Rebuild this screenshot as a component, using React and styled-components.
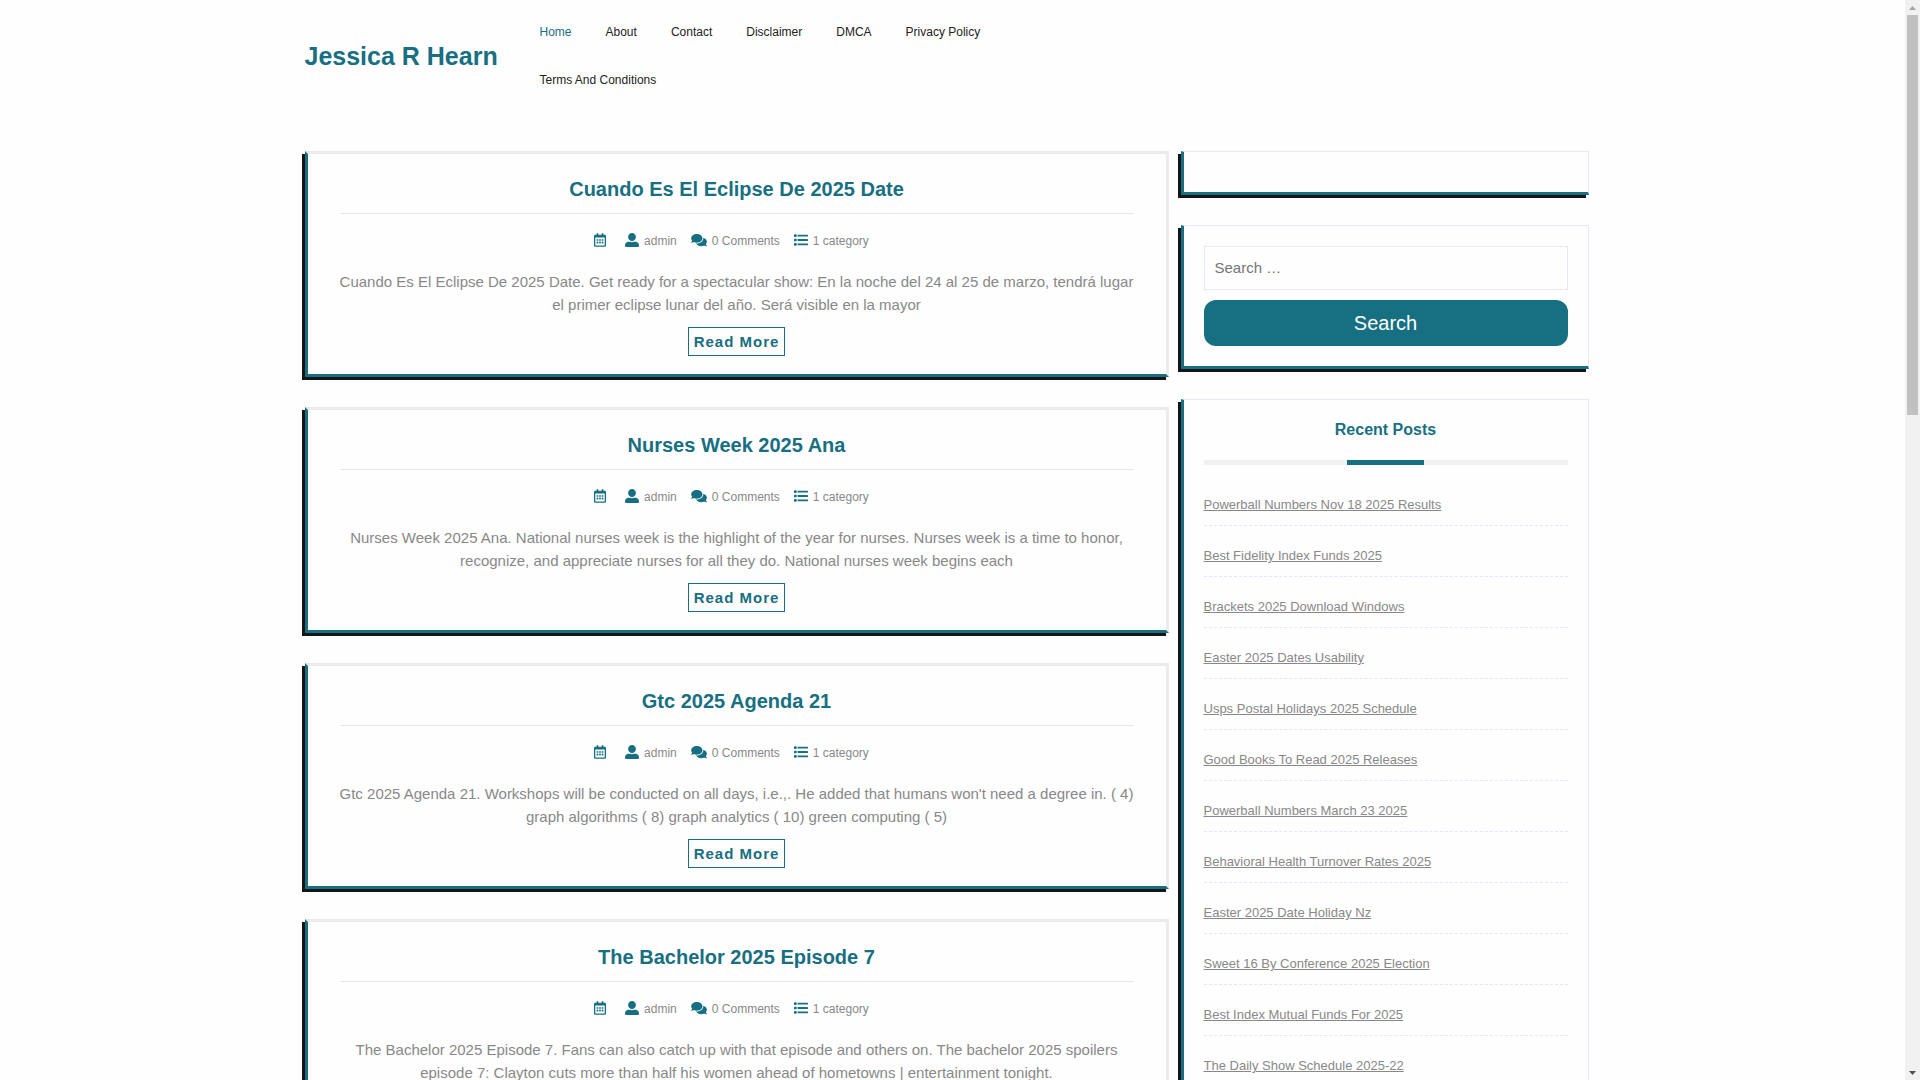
import React from 'react'
import styled, { createGlobalStyle, ThemeProvider } from 'styled-components'
import { FaRegCalendarAlt, FaUserAlt, FaComments } from 'react-icons/fa'

const theme = {
    main: "#176f82",
    dark: "#151515",
    text: "#222222",
    textSoft: "#888888",
    line: "#e6e6fa",
    soft: "#ebebeb",
}

const GlobalStyle = createGlobalStyle`
    * {
        box-sizing: border-box;
    }
    body {
        margin: 0;
        background: #fefefe;
        font-family: "Liberation Sans", Arial, sans-serif;
        font-size: 15px;
        color: ${({theme}) => theme.textSoft};
    }
`;

const Shell = styled.div`
    display: flex;
    height: 100vh;
    overflow: hidden;
`;

const Page = styled.div`
    flex: 1;
    min-width: 0;
    overflow-y: auto;
    scrollbar-width: none;
`;

const Container = styled.div`
    max-width: 1320px;
    margin: 0 auto;
    padding: 0 12px;
`;

const Header = styled.header`
    display: grid;
    grid-template-columns: 2fr 5fr 5fr;
    align-items: center;
    padding: 8px 0;
    margin-bottom: 39px;
`;

const SiteTitle = styled.h1`
    margin: 0;
    font-size: 25px;
    line-height: 30px;
    white-space: nowrap;
`;

const SiteLink = styled.a`
    color: ${({theme}) => theme.main};
    text-decoration: none;
`;

const Nav = styled.nav`
    display: flex;
    flex-wrap: wrap;
    column-gap: 34px;
    padding-left: 19px;
`;

const NavLink = styled.a`
    font-size: 12px;
    line-height: 48px;
    text-decoration: none;
    color: ${({theme, $active}) => $active ? theme.main : theme.text};
`;

const Columns = styled.div`
    display: grid;
    grid-template-columns: 2fr 1fr;
    align-items: start;
`;

const Posts = styled.main`
    display: flex;
    flex-direction: column;
    gap: 30px;
    padding-bottom: 30px;
`;

const Post = styled.article`
    display: flex;
    flex-direction: column;
    align-items: center;
    padding: 23px 32px 18px;
    border: 3px solid ${({theme}) => theme.soft};
    border-left-color: ${({theme}) => theme.main};
    border-bottom-color: ${({theme}) => theme.main};
    box-shadow: -3px 3px ${({theme}) => theme.dark};
    text-align: center;
`;

const PostTitle = styled.h2`
    align-self: stretch;
    margin: 0;
    padding-bottom: 11px;
    border-bottom: 1px solid ${({theme}) => theme.line};
    font-size: 20px;
    line-height: 25px;
`;

const Meta = styled.div`
    display: flex;
    gap: 14px;
    padding: 18px 10px 20px 0;
    font-size: 12px;
    line-height: 18px;
`;

const MetaItem = styled.span`
    display: flex;
    align-items: center;
    gap: 5px;

    svg {
        flex: none;
        width: ${({$iconWidth}) => $iconWidth || 14}px;
        height: 14px;
        margin-bottom: 2px;
        color: ${({theme}) => theme.main};
    }
`;

const Excerpt = styled.p`
    margin: 0 0 11px;
    line-height: 23px;
`;

const ReadMore = styled.a`
    padding: 5px;
    border: 1px solid ${({theme}) => theme.main};
    color: ${({theme}) => theme.main};
    font-weight: bold;
    line-height: 17px;
    letter-spacing: 1px;
    text-decoration: none;
`;

const Sidebar = styled.aside`
    display: flex;
    flex-direction: column;
    gap: 30px;
    padding: 0 12px 30px;
`;

const Widget = styled.section`
    padding: 20px;
    border: 1px solid ${({theme}) => theme.line};
    border-left: 3px solid ${({theme}) => theme.main};
    border-bottom: 3px solid ${({theme}) => theme.main};
    box-shadow: -3px 3px ${({theme}) => theme.dark};
`;

const SearchForm = styled.form`
    display: flex;
    flex-direction: column;
    gap: 10px;
`;

const SearchInput = styled.input`
    width: 100%;
    height: 44px;
    padding: 0 10px 2px;
    border: 1px solid ${({theme}) => theme.line};
    background: transparent;
    font-family: inherit;
    font-size: 15px;

    &::placeholder {
        color: #757575;
    }
`;

const SearchButton = styled.button`
    height: 46px;
    border: none;
    border-radius: 12px;
    background: ${({theme}) => theme.main};
    color: white;
    font-family: inherit;
    font-size: 20px;
    cursor: pointer;
`;

const WidgetTitle = styled.h3`
    margin: 0 0 10px;
    color: ${({theme}) => theme.main};
    font-size: 16px;
    line-height: 20px;
    text-align: center;

    &::after {
        content: "";
        display: block;
        height: 5px;
        margin-top: 20px;
        background: linear-gradient(${({theme}) => theme.main}, ${({theme}) => theme.main}) center / 77px 5px no-repeat #f1f1f1;
    }
`;

const RecentList = styled.ul`
    margin: 0;
    padding: 0;
    list-style: none;
`;

const RecentItem = styled.li`
    padding: 20px 0 10px;
    border-bottom: 1px dashed ${({theme}) => theme.line};
    font-size: 13px;
    line-height: 20px;
`;

const RecentLink = styled.a`
    color: inherit;
    text-decoration: underline;
`;

const ScrollTrack = styled.div`
    display: flex;
    flex-direction: column;
    align-items: center;
    gap: 5px;
    flex: 0 0 15px;
    padding: 5px 0;
    background: #f1f1f1;
`;

const ScrollThumb = styled.div`
    width: 11px;
    height: 37vh;
    margin-bottom: auto;
    background: #c1c1c1;
`;

const navLinks = ["Home", "About", "Contact", "Disclaimer", "DMCA", "Privacy Policy", "Terms And Conditions"]

const posts = [
    {
        title: "Cuando Es El Eclipse De 2025 Date",
        text: "Cuando Es El Eclipse De 2025 Date. Get ready for a spectacular show: En la noche del 24 al 25 de marzo, tendrá lugar el primer eclipse lunar del año. Será visible en la mayor",
    },
    {
        title: "Nurses Week 2025 Ana",
        text: "Nurses Week 2025 Ana. National nurses week is the highlight of the year for nurses. Nurses week is a time to honor, recognize, and appreciate nurses for all they do. National nurses week begins each",
    },
    {
        title: "Gtc 2025 Agenda 21",
        text: "Gtc 2025 Agenda 21. Workshops will be conducted on all days, i.e.,. He added that humans won't need a degree in. ( 4) graph algorithms ( 8) graph analytics ( 10) green computing ( 5)",
    },
    {
        title: "The Bachelor 2025 Episode 7",
        text: "The Bachelor 2025 Episode 7. Fans can also catch up with that episode and others on. The bachelor 2025 spoilers episode 7: Clayton cuts more than half his women ahead of hometowns | entertainment tonight.",
    },
]

const recentPosts = [
    "Powerball Numbers Nov 18 2025 Results",
    "Best Fidelity Index Funds 2025",
    "Brackets 2025 Download Windows",
    "Easter 2025 Dates Usability",
    "Usps Postal Holidays 2025 Schedule",
    "Good Books To Read 2025 Releases",
    "Powerball Numbers March 23 2025",
    "Behavioral Health Turnover Rates 2025",
    "Easter 2025 Date Holiday Nz",
    "Sweet 16 By Conference 2025 Election",
    "Best Index Mutual Funds For 2025",
    "The Daily Show Schedule 2025-22",
]

const ListIcon = () => (
    <svg viewBox="0 0 512 512" fill="currentColor">
        {[96, 256, 416].map((y) => (
            <g key={y}>
                <rect x="0" y={y - 48} width="96" height="96" rx="16" />
                <rect x="128" y={y - 36} width="384" height="72" rx="16" />
            </g>
        ))}
    </svg>
)

const PostCard = ({ post }) => (
    <Post>
        <PostTitle><SiteLink href="#">{post.title}</SiteLink></PostTitle>
        <Meta>
            {/* posts have no date yet */}
            <MetaItem $iconWidth={12}><FaRegCalendarAlt /><span></span></MetaItem>
            <MetaItem><FaUserAlt /><span>admin</span></MetaItem>
            <MetaItem $iconWidth={16}><FaComments /><span>0 Comments</span></MetaItem>
            <MetaItem><ListIcon /><span>1 category</span></MetaItem>
        </Meta>
        <Excerpt>{post.text}</Excerpt>
        <ReadMore href="#">Read More</ReadMore>
    </Post>
)

const App = () => {
    return (
        <ThemeProvider theme={theme}>
            <GlobalStyle />
            <Shell>
                <Page>
                    <Container>
                        <Header>
                            <SiteTitle><SiteLink href="#">Jessica R Hearn</SiteLink></SiteTitle>
                            <Nav>
                                {navLinks.map((name, i) => (
                                    <NavLink key={name} href="#" $active={i === 0}>{name}</NavLink>
                                ))}
                            </Nav>
                        </Header>
                        <Columns>
                            <Posts>
                                {posts.map((post) => <PostCard key={post.title} post={post} />)}
                            </Posts>
                            <Sidebar>
                                <Widget />
                                <Widget>
                                    <SearchForm>
                                        <SearchInput type="search" aria-label="Search for:" placeholder="Search …" />
                                        <SearchButton type="button">Search</SearchButton>
                                    </SearchForm>
                                </Widget>
                                <Widget>
                                    <WidgetTitle>Recent Posts</WidgetTitle>
                                    <RecentList>
                                        {recentPosts.map((name) => (
                                            <RecentItem key={name}><RecentLink href="#">{name}</RecentLink></RecentItem>
                                        ))}
                                    </RecentList>
                                </Widget>
                            </Sidebar>
                        </Columns>
                    </Container>
                </Page>
                <ScrollTrack aria-hidden="true">
                    <svg width="7" height="5" viewBox="0 0 7 5"><path d="M3.5 1L7 5H0Z" fill="#a3a3a3" /></svg>
                    <ScrollThumb />
                    <svg width="7" height="4" viewBox="0 0 7 4"><path d="M0 0H7L3.5 4Z" fill="#505050" /></svg>
                </ScrollTrack>
            </Shell>
        </ThemeProvider>
    )
}

export default App
